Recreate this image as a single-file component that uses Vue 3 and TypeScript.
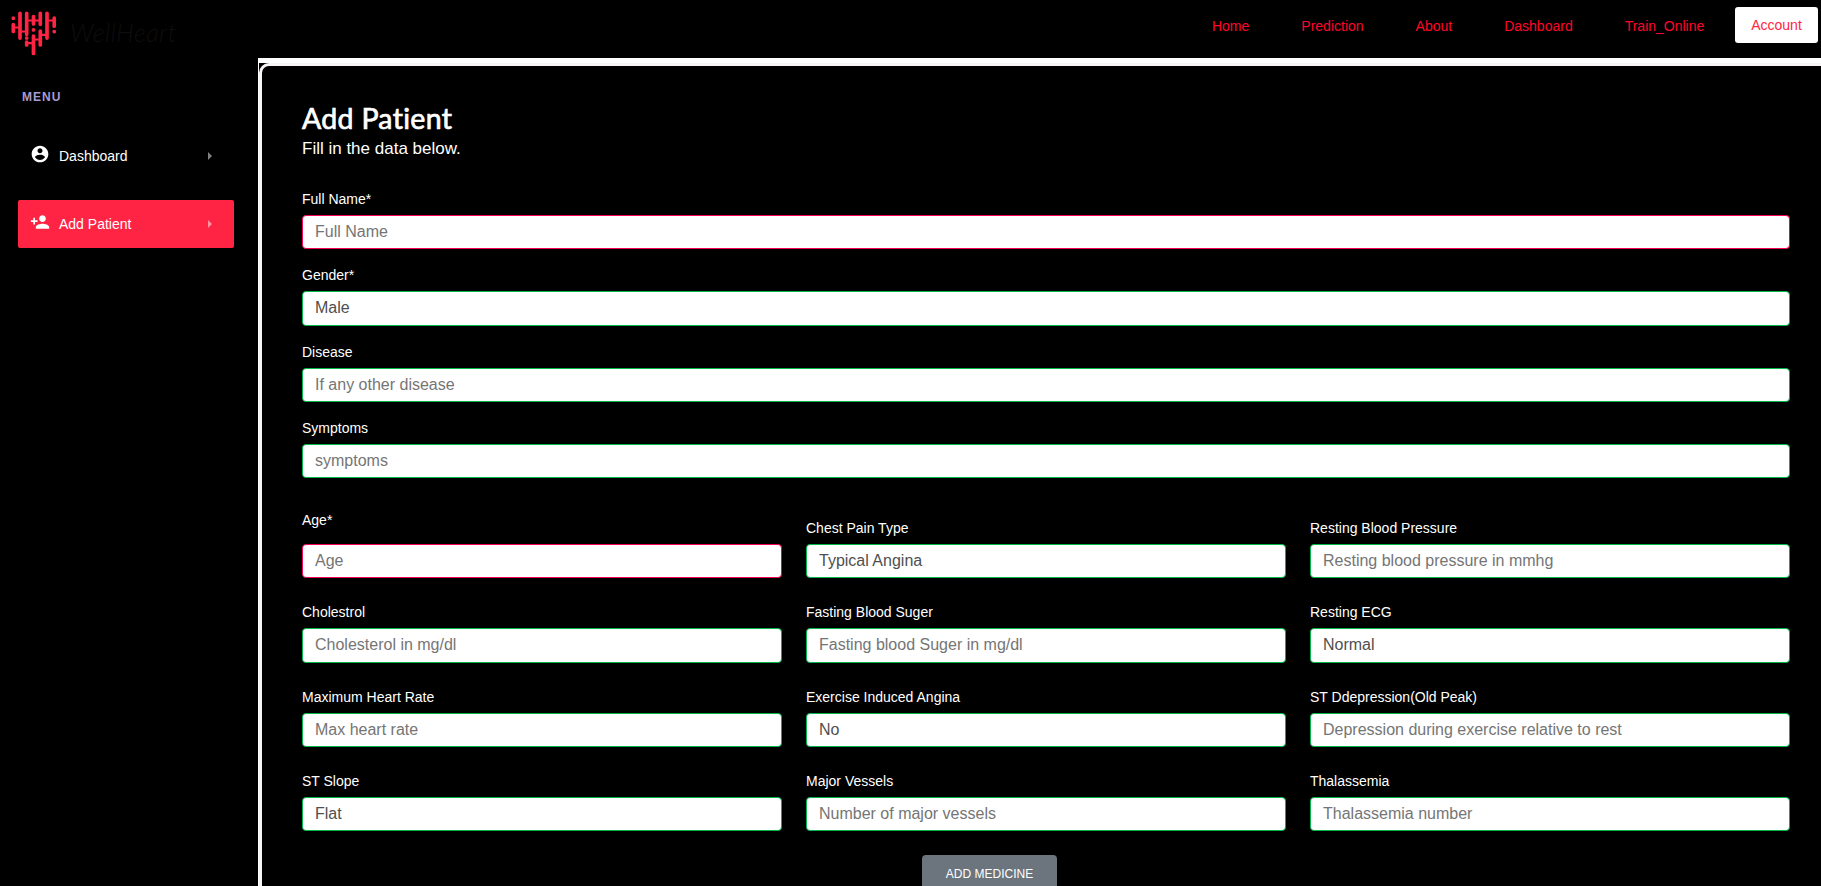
<script setup lang="ts">
interface Field {
  label: string
  hint?: string
  value?: string
  required?: boolean
}

const navLinks: string[] = ['Home', 'Prediction', 'About', 'Dashboard', 'Train_Online']

const wideFields: Field[] = [
  { label: 'Full Name*', hint: 'Full Name', required: true },
  { label: 'Gender*', value: 'Male' },
  { label: 'Disease', hint: 'If any other disease' },
  { label: 'Symptoms', hint: 'symptoms' },
]

const gridFields: Field[] = [
  { label: 'Age*', hint: 'Age', required: true },
  { label: 'Chest Pain Type', value: 'Typical Angina' },
  { label: 'Resting Blood Pressure', hint: 'Resting blood pressure in mmhg' },
  { label: 'Cholestrol', hint: 'Cholesterol in mg/dl' },
  { label: 'Fasting Blood Suger', hint: 'Fasting blood Suger in mg/dl' },
  { label: 'Resting ECG', value: 'Normal' },
  { label: 'Maximum Heart Rate', hint: 'Max heart rate' },
  { label: 'Exercise Induced Angina', value: 'No' },
  { label: 'ST Ddepression(Old Peak)', hint: 'Depression during exercise relative to rest' },
  { label: 'ST Slope', value: 'Flat' },
  { label: 'Major Vessels', hint: 'Number of major vessels' },
  { label: 'Thalassemia', hint: 'Thalassemia number' },
]
</script>

<template>
  <div class="page">
    <header class="navbar">
      <a class="brand">
        <svg class="logo" width="46" height="46" viewBox="0 0 46 46" fill="none" stroke="#ff2444" stroke-linecap="round">
          <path stroke-width="3.7" d="M3.300 8.200v.1M3.300 14.500v7M10 3.300v24.800M16.700 3.300v21M16.700 28v.1M16.700 32v3M23.500 6.500v7.500M23.500 19.800v.1M23.500 26v17.500M30.300 3.300v11M30.300 21v14M37 3.300v24.800M44.200 8.200v8M44.200 21.500v.1" />
          <path stroke-width="2.200" d="M3.300 17.500h6.700M10 21.500h6.700M16.700 10.500h6.800M23.500 10.500h6.800M37 10.500h7.200M30.300 24.800h6.700M23.500 29.500h6.800M16.700 33.200h6.800" />
        </svg>
        <span class="brand-name">WellHeart</span>
      </a>
      <nav class="links">
        <a v-for="link in navLinks" :key="link" class="link">{{ link }}</a>
        <a class="account">Account</a>
      </nav>
    </header>

    <div class="body">
      <aside class="sidebar">
        <div class="menu-title">MENU</div>
        <a class="item">
          <svg class="icon" width="20" height="20" viewBox="0 0 24 24" fill="#fff">
            <path d="M12 2C6.480 2 2 6.480 2 12s4.480 10 10 10 10-4.480 10-10S17.520 2 12 2zm0 3c1.660 0 3 1.340 3 3s-1.340 3-3 3-3-1.340-3-3 1.340-3 3-3zm0 14.200c-2.500 0-4.710-1.280-6-3.220.03-1.990 4-3.080 6-3.080 1.990 0 5.970 1.090 6 3.080-1.290 1.940-3.500 3.220-6 3.220z" />
          </svg>
          <span class="item-label">Dashboard</span>
          <span class="caret"></span>
        </a>
        <a class="item active">
          <svg class="icon" width="20" height="20" viewBox="0 0 24 24" fill="#fff">
            <path d="M15 12c2.210 0 4-1.790 4-4s-1.790-4-4-4-4 1.790-4 4 1.790 4 4 4zm-9-2V7H4v3H1v2h3v3h2v-3h3v-2H6zm9 4c-2.670 0-8 1.340-8 4v2h16v-2c0-2.660-5.330-4-8-4z" />
          </svg>
          <span class="item-label">Add Patient</span>
          <span class="caret"></span>
        </a>
      </aside>

      <main class="content">
        <section class="card">
          <h3 class="title">Add Patient</h3>
          <p class="subtitle">Fill in the data below.</p>

          <div class="wide">
            <div v-for="field in wideFields" :key="field.label" class="field">
              <label class="label">{{ field.label }}</label>
              <input class="input" :class="{ invalid: field.required }" type="text" :placeholder="field.hint" :value="field.value" />
            </div>
          </div>

          <div class="grid">
            <div v-for="field in gridFields" :key="field.label" class="field">
              <label class="label" :class="{ raised: field.required }">{{ field.label }}</label>
              <input class="input" :class="{ invalid: field.required }" type="text" :placeholder="field.hint" :value="field.value" />
            </div>
          </div>

          <div class="actions">
            <button class="add" type="button">ADD MEDICINE</button>
          </div>
        </section>
      </main>
    </div>
  </div>
</template>

<style>
body {
  margin: 0;
  background: #fff;
  overflow: hidden;
}
</style>

<style scoped>
.page {
  height: 886px;
  overflow: hidden;
  display: flex;
  flex-direction: column;
  font-family: "Liberation Sans", Arial, sans-serif;
  color: #fff;
}
.navbar {
  flex: none;
  height: 58px;
  display: flex;
  justify-content: space-between;
  background: #000;
}
.brand {
  display: flex;
  align-items: flex-start;
  padding: 9.500px 0 0 10px;
}
.brand-name {
  margin: 8px 0 0 14px;
  font: italic 300 25px/28px Lato, sans-serif;
  letter-spacing: 0.500px;
  color: #0e0e0e;
}
.links {
  display: flex;
  align-items: flex-start;
  padding: 7px 3px 0 0;
  font-size: 14px;
}
.link {
  margin-right: 52px;
  line-height: 38px;
  color: #ff0529;
}
.link:nth-last-child(2) {
  margin-right: 30.700px;
}
.account {
  width: 83px;
  height: 36px;
  line-height: 36px;
  text-align: center;
  border-radius: 3px;
  background: #fff;
  color: #ff2444;
}
.body {
  flex: 1;
  min-height: 0;
  display: flex;
}
.sidebar {
  flex: none;
  box-sizing: border-box;
  width: 258px;
  padding: 32px 24px 0 18px;
  background: #000;
}
.menu-title {
  padding-left: 4px;
  font-size: 12px;
  line-height: 14px;
  font-weight: 700;
  letter-spacing: 1px;
  color: #a79bd4;
}
.item {
  display: flex;
  align-items: center;
  box-sizing: border-box;
  height: 48px;
  margin-top: 28px;
  padding: 0 22px 0 12px;
  border-radius: 2px;
  font-size: 14px;
}
.item + .item {
  margin-top: 20px;
}
.item.active {
  background: #ff2444;
}
.icon {
  margin-top: -5px;
}
.item-label {
  flex: 1;
  margin-left: 9px;
}
.caret {
  border: 4px solid transparent;
  border-left-color: #fff;
  border-right: 0;
  opacity: 0.500;
}
.content {
  flex: 1;
  min-width: 0;
  padding: 5px 0 0 1px;
  background: linear-gradient(#000, #000) 1px 5px no-repeat #fff;
}
.card {
  box-sizing: border-box;
  height: 900px;
  margin-right: -10px;
  padding: 35px 38px 0 40px;
  border: 3px solid #f8f4f8;
  border-radius: 10px;
  background: #000;
}
.title {
  margin: 0;
  font: 400 28.500px/35px Lato, sans-serif;
  letter-spacing: 0.300px;
  -webkit-text-stroke: 0.700px #fff;
}
.subtitle {
  margin: 0;
  font-size: 17px;
  line-height: 26px;
}
.wide {
  margin-top: 26.800px;
}
.field {
  display: flex;
  flex-direction: column;
}
.label {
  font-size: 14px;
  line-height: 20px;
  margin-bottom: 6px;
}
.input {
  box-sizing: border-box;
  width: 100%;
  height: 34.400px;
  padding: 0 12px;
  border: 1px solid #00b74a;
  border-radius: 4px;
  outline: none;
  background: #fff;
  font-family: inherit;
  font-size: 16px;
  color: #4f4f4f;
}
.input::placeholder {
  color: #757575;
  opacity: 1;
}
.input.invalid {
  border-color: #f50057;
}
.wide .field + .field {
  margin-top: 16px;
}
.grid {
  display: grid;
  grid-template-columns: repeat(3, 480px);
  column-gap: 24px;
  row-gap: 24px;
  margin-top: 39.400px;
}
.raised {
  transform: translateY(-8px);
}
.actions {
  display: flex;
  justify-content: center;
  margin-top: 24px;
  padding-right: 113px;
}
.add {
  width: 135px;
  height: 37px;
  padding: 0;
  border: 0;
  border-radius: 4px;
  background: #6c757d;
  font-family: inherit;
  font-size: 12px;
  color: #fff;
}
</style>
